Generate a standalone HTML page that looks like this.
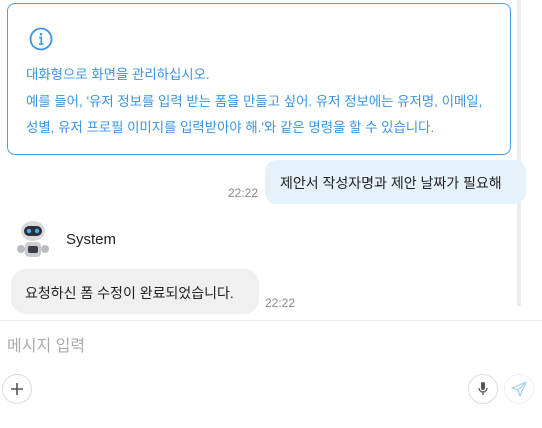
<!DOCTYPE html>
<html><head><meta charset="utf-8"><style>
*{margin:0;padding:0;box-sizing:border-box}
body{width:542px;height:428px;background:#fff;font-family:"Liberation Sans","Noto Sans CJK KR",sans-serif;position:relative;overflow:hidden}
.abs{position:absolute}
.box{left:7px;top:3px;width:504px;height:152px;border:1px solid #4a9ee8;border-radius:8px}
.info{color:#3a94e6;font-size:13.4px;left:26px;white-space:nowrap}
.sb{left:517px;top:0;width:4px;height:306px;background:#ececec;border-radius:2px}
.ub{left:265px;top:160px;width:261px;height:44px;background:#e5f2fc;border-radius:12px;font-size:14px;color:#222;padding:13px 0 0 15px;white-space:nowrap}
.t{font-size:12px;color:#888}
.sbub{left:11px;top:269px;width:248px;height:45px;background:#f0f0f0;border-radius:15px;font-size:14px;color:#222;padding:14px 0 0 14px;white-space:nowrap}
.btn{width:30px;height:30px;border-radius:50%;border:1px solid #ddd;display:flex;align-items:center;justify-content:center}
</style></head><body>
<div class="abs box"></div>
<svg class="abs" style="left:29px;top:27px" width="24" height="24" viewBox="0 0 24 24"><circle cx="12" cy="12" r="10.5" fill="none" stroke="#3a94e6" stroke-width="1.8"/><circle cx="12" cy="7.3" r="1.3" fill="#3a94e6"/><path d="M10 10.5h2.3v6.5M10 17h4.5" stroke="#3a94e6" stroke-width="1.6" fill="none"/></svg>
<div class="abs info" style="top:63px">대화형으로 화면을 관리하십시오.</div>
<div class="abs info" style="top:90px">예를 들어, '유저 정보를 입력 받는 폼을 만들고 싶어. 유저 정보에는 유저명, 이메일,</div>
<div class="abs info" style="top:116px">성별, 유저 프로필 이미지를 입력받아야 해.'와 같은 명령을 할 수 있습니다.</div>
<div class="abs sb"></div>
<div class="abs ub">제안서 작성자명과 제안 날짜가 필요해</div>
<div class="abs t" style="left:228px;top:186px">22:22</div>
<svg class="abs" style="left:15px;top:219px" width="36" height="40" viewBox="0 0 36 40"><ellipse cx="18" cy="12" rx="12" ry="10" fill="#d8dadd"/><rect x="9" y="7" width="18" height="10" rx="5" fill="#2b3038"/><circle cx="14" cy="12" r="2.2" fill="#4aa8ff"/><circle cx="22" cy="12" r="2.2" fill="#4aa8ff"/><rect x="10" y="23" width="16" height="15" rx="4" fill="#c9ccd0"/><rect x="13" y="27" width="10" height="7" rx="2" fill="#3a3f47"/><circle cx="6" cy="30" r="4" fill="#b8bbc0"/><circle cx="30" cy="30" r="4" fill="#b8bbc0"/></svg>
<div class="abs" style="left:66px;top:231px;font-size:15px;color:#222">System</div>
<div class="abs sbub">요청하신 폼 수정이 완료되었습니다.</div>
<div class="abs t" style="left:265px;top:296px">22:22</div>
<div class="abs" style="left:0;top:320px;width:542px;height:1px;background:#e4e8ec"></div>
<div class="abs" style="left:7px;top:332px;font-size:16px;color:#aaa">메시지 입력</div>
<div class="abs btn" style="left:2px;top:374px"><svg width="14" height="14"><path d="M7 1v12M1 7h12" stroke="#555" stroke-width="1.6"/></svg></div>
<div class="abs btn" style="left:468px;top:374px"><svg width="14" height="16" viewBox="0 0 14 16"><rect x="5" y="1" width="4" height="8" rx="2" fill="#555"/><path d="M3 7a4 4 0 0 0 8 0M7 11v3" stroke="#555" stroke-width="1.3" fill="none"/></svg></div>
<div class="abs btn" style="left:504px;top:374px;border-color:#eef0f2"><svg width="16" height="16" viewBox="0 0 16 16"><path d="M15 1L1 7l6 2 2 6zM7 9l8-8" stroke="#a8cff5" stroke-width="1.2" fill="none" stroke-linejoin="round"/></svg></div>
</body></html>
